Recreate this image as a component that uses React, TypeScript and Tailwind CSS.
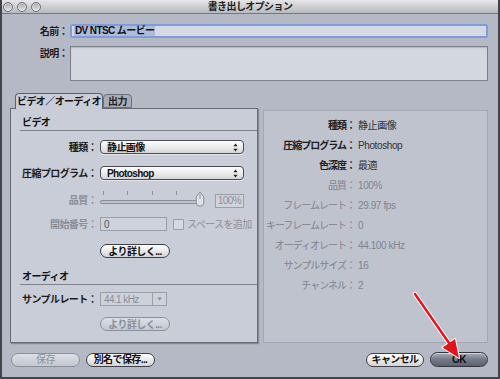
import type { ReactNode } from "react";

const FONT = "font-['Liberation_Sans','Noto_Sans_CJK_JP',sans-serif]";

/** Up/down arrows drawn at the right of an Aqua popup. */
function UpDown() {
  return (
    <svg width="5" height="9" viewBox="0 0 5 9" className="shrink-0">
      <path d="M2.5 0.5 L4.6 3.2 L0.4 3.2 Z" fill="#222" />
      <path d="M2.5 8.5 L4.6 5.8 L0.4 5.8 Z" fill="#222" />
    </svg>
  );
}

function Popup({ value }: { value: string }) {
  return (
    <div className="ml-[3px] flex h-[14px] w-[144px] items-center justify-between rounded-[4px] border border-[#4a4c52] bg-gradient-to-b from-[#fdfdfd] via-[#ececec] to-[#d6d6d6] pr-[5px] pl-[6px] shadow-[0_1px_0_rgba(255,255,255,0.5)]">
      <span className="font-bold text-[#111]">{value}</span>
      <UpDown />
    </div>
  );
}

function RoundButton({
  children,
  disabled = false,
  className = "",
}: {
  children: ReactNode;
  disabled?: boolean;
  className?: string;
}) {
  const tone = disabled
    ? "border-[#8b8f99] text-[#8b8f99] from-[#dcdfe6] to-[#c3c7d0]"
    : "border-[#3e4047] text-[#111] from-[#ffffff] to-[#d4d4d6]";
  return (
    <div
      className={`flex h-[14px] items-center justify-center rounded-full border bg-gradient-to-b font-bold ${tone} ${className}`}
    >
      {children}
    </div>
  );
}

function FormLabel({ text, dim = false }: { text: string; dim?: boolean }) {
  return (
    <span
      className={`w-[86px] shrink-0 text-right font-bold ${dim ? "text-[#8b8f99]" : "text-[#1c1c1c]"}`}
    >
      {text}
    </span>
  );
}

function SectionHeader({ text, className = "" }: { text: string; className?: string }) {
  return (
    <div className={`ml-[9px] border-b border-[#7e828c] pl-[2px] font-bold leading-[14px] text-[#111] ${className}`}>
      {text}
    </div>
  );
}

const INFO: { label: string; value: string; strong: boolean }[] = [
  { label: "種類：", value: "静止画像", strong: true },
  { label: "圧縮プログラム：", value: "Photoshop", strong: true },
  { label: "色深度：", value: "最適", strong: true },
  { label: "品質：", value: "100%", strong: false },
  { label: "フレームレート：", value: "29.97 fps", strong: false },
  { label: "キーフレームレート：", value: "0", strong: false },
  { label: "オーディオレート：", value: "44.100 kHz", strong: false },
  { label: "サンプルサイズ：", value: "16", strong: false },
  { label: "チャンネル：", value: "2", strong: false },
];

function TrafficLight() {
  return (
    <span className="h-[10px] w-[10px] rounded-full border border-[#6d6f75] bg-gradient-to-b from-[#a8a9ad] to-[#e4e4e6] shadow-[inset_0_0_0_1px_rgba(255,255,255,0.4)]" />
  );
}

export default function App() {
  return (
    <div
      className={`relative flex h-[379px] w-[500px] flex-col overflow-hidden border-x-2 border-b-2 border-[#42444c] bg-[#b5b9c5] text-[10px] leading-[13px] tracking-[-0.6px] whitespace-nowrap ${FONT}`}
    >
      {/* title bar */}
      <div className="relative flex h-[14px] shrink-0 items-center border-b border-[#76787e] bg-gradient-to-b from-[#e6e6e8] to-[#b9babe]">
        <div className="flex gap-[4px] pl-[1px]">
          <TrafficLight />
          <TrafficLight />
          <TrafficLight />
        </div>
        <span className="absolute inset-x-0 text-center font-bold text-[#222]">
          書き出しオプション
        </span>
      </div>

      <div className="flex flex-1 flex-col pr-[10px] pl-[8px]">
        {/* name */}
        <div className="mt-[10px] flex items-center">
          <span className="w-[58px] shrink-0 text-right font-bold text-[#1c1c1c]">名前：</span>
          <div className="ml-[2px] flex h-[14px] flex-1 items-center rounded-[2px] border-2 border-[#7f9ddb] bg-[#d5d9e3] pl-[2px]">
            <span className="bg-[#aebcd9] px-[1px] font-bold leading-[10px] text-[#111]">
              DV NTSC ムービー
            </span>
          </div>
        </div>

        {/* description */}
        <div className="mt-[8px] flex items-start">
          <span className="w-[58px] shrink-0 pt-[1px] text-right font-bold text-[#1c1c1c]">説明：</span>
          <div className="ml-[2px] h-[35px] flex-1 border border-[#7c808a] bg-[#d3d7e0] shadow-[inset_0_1px_1px_rgba(0,0,0,0.15)]" />
        </div>

        {/* tabs + panels */}
        <div className="mt-[12px] flex">
          <div className="flex w-[248px] shrink-0 flex-col">
            <div className="flex h-[15px] pl-[5px]">
              <div className="z-10 -mb-px flex w-[88px] items-center justify-center rounded-t-[4px] border border-b-0 border-[#5c6069] bg-[#c9cdd7] font-bold text-[#111]">
                ビデオ／オーディオ
              </div>
              <div className="mt-[1px] flex w-[29px] items-center justify-center rounded-t-[4px] border border-[#6c7079] bg-[#a9adb8] font-bold text-[#222]">
                出力
              </div>
            </div>
            <div className="flex h-[235px] flex-col border border-[#676b74] bg-[#c9cdd7] shadow-[1px_1px_1px_rgba(0,0,0,0.25)]">
              <SectionHeader text="ビデオ" className="mt-[7px]" />

              <div className="mt-[9px] flex items-center">
                <FormLabel text="種類：" />
                <Popup value="静止画像" />
              </div>

              <div className="mt-[12px] flex items-center">
                <FormLabel text="圧縮プログラム：" />
                <Popup value="Photoshop" />
              </div>

              <div className="mt-[13px] flex h-[15px] items-center">
                <FormLabel text="品質：" dim />
                <div className="relative ml-[3px] h-[15px] w-[106px]">
                  {[3, 27, 52, 76].map((x) => (
                    <span
                      key={x}
                      className="absolute top-[-2px] h-[4px] w-px bg-[#8e929b]"
                      style={{ left: x }}
                    />
                  ))}
                  <span className="absolute top-[7px] left-0 h-[4px] w-[100px] rounded-full border border-[#8a8e97] bg-[#bfc3cc]" />
                  <svg
                    width="10"
                    height="16"
                    viewBox="0 0 10 16"
                    className="absolute top-[-2px] left-[95px]"
                  >
                    <path
                      d="M5 0.8 L8.8 6 L8.8 11.5 Q8.8 15.2 5 15.2 Q1.2 15.2 1.2 11.5 L1.2 6 Z"
                      fill="#dfe2e8"
                      stroke="#8a8e97"
                    />
                    <line x1="5" y1="3" x2="5" y2="8" stroke="#8a8e97" />
                  </svg>
                </div>
                <div className="ml-[9px] flex h-[14px] w-[29px] items-center justify-end border border-[#9a9ea8] bg-[#cfd3dc] pr-[2px] text-[#8b8f99]">
                  100%
                </div>
              </div>

              <div className="mt-[9px] flex items-center">
                <FormLabel text="開始番号：" dim />
                <div className="ml-[3px] flex h-[14px] w-[67px] items-center border border-[#9a9ea8] bg-[#cfd3dc] pl-[3px] text-[#555]">
                  0
                </div>
                <span className="ml-[6px] h-[11px] w-[11px] rounded-[1px] border border-[#9a9ea8] bg-[#d6d9e1]" />
                <span className="ml-[3px] text-[#8b8f99]">スペースを追加</span>
              </div>

              <RoundButton className="mt-[13px] ml-[89px] w-[70px]">より詳しく...</RoundButton>

              <SectionHeader text="オーディオ" className="mt-[12px]" />

              <div className="mt-[7px] flex items-center">
                <FormLabel text="サンプルレート：" />
                <div className="ml-[3px] flex h-[14px] w-[67px] items-center border border-[#9a9ea8] bg-[#cdd1da]">
                  <span className="flex-1 pl-[3px] text-[#8b8f99]">44.1 kHz</span>
                  <span className="flex h-full w-[14px] items-center justify-center border-l border-[#9a9ea8]">
                    <svg width="5" height="4" viewBox="0 0 5 4">
                      <path d="M0 0.5 L5 0.5 L2.5 3.5 Z" fill="#8b8f99" />
                    </svg>
                  </span>
                </div>
              </div>

              <RoundButton disabled className="mt-[11px] ml-[89px] w-[70px]">
                より詳しく...
              </RoundButton>
            </div>
          </div>

          {/* summary panel */}
          <div className="mt-[17px] ml-[5px] flex h-[233px] flex-1 flex-col border border-[#a4a8b2] bg-[#bfc3cd] pt-[4px] tracking-[-1px]">
            {INFO.map((row) => (
              <div key={row.label} className="flex h-[20px] items-center">
                <span
                  className={`w-[91px] shrink-0 text-right ${row.strong ? "font-bold text-[#1c1c1c]" : "text-[#80848e]"}`}
                >
                  {row.label}
                </span>
                <span
                  className={`ml-[3px] tracking-[-0.4px] ${row.strong ? "text-[#333]" : "text-[#80848e]"}`}
                >
                  {row.value}
                </span>
              </div>
            ))}
          </div>
        </div>

        {/* bottom buttons */}
        <div className="mt-[9px] flex items-center">
          <RoundButton disabled className="ml-[1px] w-[69px] font-normal">
            保存
          </RoundButton>
          <RoundButton className="ml-[6px] w-[69px]">別名で保存...</RoundButton>
          <RoundButton className="ml-auto w-[58px]">キャンセル</RoundButton>
          <div className="ml-[6px] flex h-[15px] w-[58px] items-center justify-center rounded-full border border-[#33363d] bg-gradient-to-b from-[#a9aeba] via-[#747a87] to-[#5c6270] font-bold text-[#0c0c0c] shadow-[inset_0_1px_0_rgba(255,255,255,0.5)]">
            OK
          </div>
        </div>
      </div>

      {/* red annotation arrow */}
      <svg
        width="500"
        height="379"
        viewBox="0 0 500 379"
        className="pointer-events-none absolute top-0 left-0"
      >
        <line x1="413" y1="294" x2="447" y2="343" stroke="#fff" strokeWidth="4.5" strokeLinecap="round" />
        <path d="M457 358 L440.5 347.5 L453 339 Z" fill="#fff" stroke="#fff" strokeWidth="2" strokeLinejoin="round" />
        <line x1="413" y1="294" x2="447" y2="343" stroke="#e3141b" strokeWidth="2.5" strokeLinecap="round" />
        <path d="M457 358 L440.5 347.5 L453 339 Z" fill="#e3141b" />
      </svg>
    </div>
  );
}
